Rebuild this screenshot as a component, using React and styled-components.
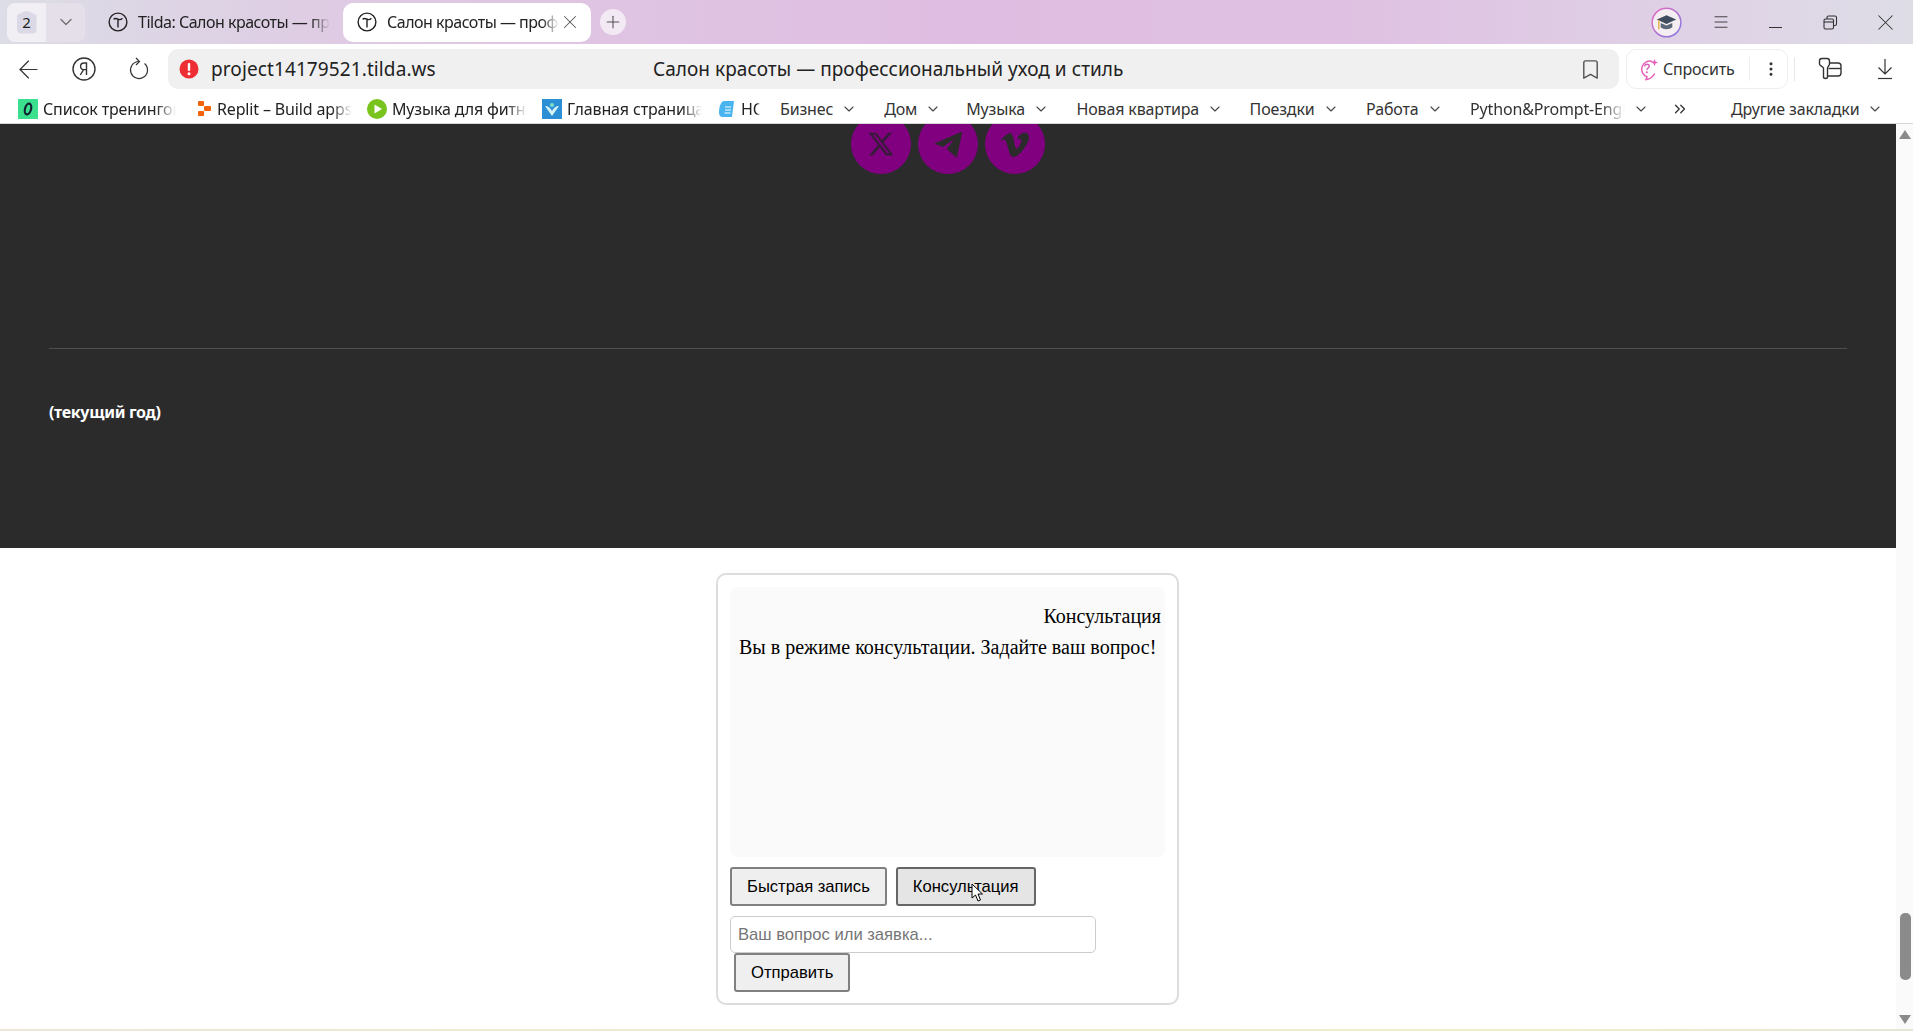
import React from "react";
import styled, { createGlobalStyle } from "styled-components";
import { ChevronDown, ChevronsRight, Plus, X, ArrowLeft, Menu, Bookmark, EllipsisVertical } from "lucide-react";

const GlobalStyle = createGlobalStyle`
  html, body { margin: 0; padding: 0; height: 100%; overflow: hidden; background: #fff; }
`;

const chromeFont = `"Noto Sans", "Open Sans", "Liberation Sans", sans-serif`;

const Shell = styled.div`
  width: 1913px;
  height: 1031px;
  display: flex;
  flex-direction: column;
  overflow: hidden;
  font-family: ${chromeFont};
  color: #222;
`;

const TabStrip = styled.div`
  height: 44px;
  flex: none;
  display: flex;
  align-items: center;
  padding-left: 7px;
  background: linear-gradient(90deg, #dcdde6 0%, #dfc9e3 20%, #dfbde2 50%, #dfc0e2 70%, #dfd3e6 90%, #dedde6 100%);
`;

const TabCounter = styled.div`
  width: 78px;
  height: 39px;
  display: flex;
  border-radius: 8px;
  background: #e5dfe9;
  overflow: hidden;
  margin-right: 7px;
`;

const CounterCell = styled.div`
  width: 39px;
  display: flex;
  align-items: center;
  justify-content: center;
  background: ${(p) => (p.$light ? "#f1eff3" : "transparent")};
  color: #777;
`;

const CounterBadge = styled.span`
  width: 20px;
  height: 23px;
  border-radius: 5px;
  background: #dcd9e6;
  clip-path: polygon(50% 0, 100% 20%, 100% 100%, 0 100%, 0 20%);
  display: flex;
  align-items: center;
  justify-content: center;
  font-size: 15px;
  color: #222;
`;

const Tab = styled.div`
  width: ${(p) => (p.$active ? 248 : 251)}px;
  height: 39px;
  flex: none;
  display: flex;
  align-items: center;
  padding: ${(p) => (p.$active ? "0 10px 0 14px" : "0 13px 0 16px")};
  box-sizing: border-box;
  border-radius: 10px;
  background: ${(p) => (p.$active ? "#fff" : "transparent")};
  font-size: 16px;
  letter-spacing: -0.5px;
  margin-right: ${(p) => (p.$active ? "9px" : "0")};
`;

const TabTitle = styled.span`
  flex: 1;
  min-width: 0;
  margin-left: 10px;
  overflow: hidden;
  white-space: nowrap;
  -webkit-mask-image: linear-gradient(90deg, #000 90%, transparent);
  mask-image: linear-gradient(90deg, #000 90%, transparent);
`;

const NewTab = styled.div`
  width: 26px;
  height: 26px;
  border-radius: 50%;
  background: #f3e9f5;
  display: flex;
  align-items: center;
  justify-content: center;
  color: #555;
`;

const StripSpacer = styled.div`
  flex: 1;
`;

const WindowButtons = styled.div`
  display: flex;
  align-items: center;
  color: #333;
`;

const WindowButton = styled.div`
  width: 55px;
  height: 28px;
  display: flex;
  justify-content: center;
  align-items: center;
`;

const MinimizeBar = styled.span`
  width: 13px;
  height: 1px;
  margin-top: 11px;
  background: #333;
`;

const Toolbar = styled.div`
  height: 45px;
  flex: none;
  box-sizing: border-box;
  display: flex;
  align-items: center;
  background: #fff;
  border-radius: 10px 10px 0 0;
  padding: 5px 0 0 1px;
`;

const ToolIcon = styled.div`
  width: 55px;
  flex: none;
  display: flex;
  justify-content: center;
  align-items: center;
  color: #333;
`;

const AddressBar = styled.div`
  width: 1451px;
  height: 40px;
  margin-left: 2px;
  flex: none;
  display: flex;
  align-items: center;
  position: relative;
  padding: 0 17px 0 11px;
  box-sizing: border-box;
  border-radius: 10px;
  background: #f0f0f0;
  font-size: 19px;
`;

const UrlText = styled.span`
  margin-left: 12px;
  letter-spacing: 0.1px;
`;

const PageTitle = styled.span`
  position: absolute;
  left: 485px;
  letter-spacing: 0.05px;
`;

const AddressEnd = styled.div`
  margin-left: auto;
  display: flex;
  color: #555;
`;

const AskPill = styled.div`
  width: 162px;
  height: 40px;
  margin-left: 7px;
  flex: none;
  display: flex;
  align-items: center;
  box-sizing: border-box;
  padding-left: 11px;
  border: 1px solid #eeeeee;
  border-radius: 10px;
  font-size: 16px;
  letter-spacing: -0.2px;
  color: #333;
`;

const AskLabel = styled.span`
  margin-left: 4px;
`;

const AskDivider = styled.span`
  width: 1px;
  height: 24px;
  background: #eee;
  margin: 0 12px 0 14px;
`;

const ToolSeparator = styled.span`
  width: 1px;
  height: 24px;
  background: #e6e6e6;
  margin: 0 7px 0 6px;
`;

const Bookmarks = styled.div`
  height: 35px;
  flex: none;
  display: flex;
  align-items: center;
  background: #fff;
  font-size: 16px;
  letter-spacing: -0.15px;
  padding: 6px 0 0 18px;
  border-bottom: 1px solid #d8d8d8;
  box-sizing: border-box;
`;

const BookmarkLink = styled.div`
  width: ${(p) => p.$w}px;
  margin-right: ${(p) => p.$gap}px;
  flex: none;
  display: flex;
  align-items: center;
  gap: 5px;
`;

const BookmarkFolder = styled.div`
  margin-right: ${(p) => p.$gap}px;
  flex: none;
  display: flex;
  align-items: center;
  gap: 8px;
  color: #333;
`;

const FadeLabel = styled.span`
  flex: 1;
  overflow: hidden;
  white-space: nowrap;
  -webkit-mask-image: linear-gradient(90deg, #000 85%, transparent);
  mask-image: linear-gradient(90deg, #000 85%, transparent);
`;

const FolderClip = styled(FadeLabel)`
  flex: none;
  width: 155px;
`;

const Viewport = styled.div`
  flex: 1;
  min-height: 0;
  display: flex;
`;

const Page = styled.div`
  flex: 1;
  min-width: 0;
  display: flex;
  flex-direction: column;
  overflow: hidden;
`;

const Footer = styled.footer`
  height: 424px;
  flex: none;
  box-sizing: border-box;
  background: #2b2b2b;
  padding: 0 49px;
`;

const Socials = styled.div`
  display: flex;
  justify-content: center;
  gap: 7px;
  margin-top: -10px;
  height: 60px;
`;

const SocialDot = styled.a`
  width: 60px;
  height: 60px;
  border-radius: 50%;
  background: #800080;
  display: flex;
  align-items: center;
  justify-content: center;
`;

const FooterRule = styled.hr`
  margin: 174px 0 0;
  border: 0;
  height: 1px;
  background: #505050;
`;

const Copyright = styled.p`
  margin: 52px 0 0;
  color: #fff;
  font: 700 16px/22px "Noto Sans", "Open Sans", sans-serif;
  letter-spacing: -0.3px;
`;

const WidgetArea = styled.section`
  flex: 1;
  min-height: 0;
  display: flex;
  flex-direction: column;
  align-items: center;
  padding: 25px 0 0;
`;

const Widget = styled.div`
  width: 463px;
  height: 432px;
  margin-left: -1px;
  box-sizing: border-box;
  border: 2px solid #ddd;
  border-radius: 10px;
  padding: 12px;
  background: #fff;
  font-family: "Liberation Sans", Arial, sans-serif;
`;

const ChatLog = styled.div`
  height: 270px;
  border-radius: 8px;
  background: #fafafa;
  padding: 17px 4px 0 9px;
  box-sizing: border-box;
  font: 20px/1.2 "Liberation Serif", "Times New Roman", serif;
  color: #000;
`;

const ChatLine = styled.div`
  text-align: ${(p) => (p.$right ? "right" : "left")};
  margin-bottom: 7px;
`;

const ModeRow = styled.div`
  display: flex;
  gap: 9px;
  margin-top: 10px;
`;

const PlainButton = styled.button`
  position: relative;
  height: 39px;
  padding: 0 15px;
  box-sizing: border-box;
  border: 2px solid ${(p) => (p.$hover ? "#666" : "#808080")};
  border-radius: 3px;
  background: ${(p) => (p.$hover ? "#e5e5e5" : "#efefef")};
  font: 16.6px "Liberation Sans", Arial, sans-serif;
  color: #000;
`;

const InputBox = styled.input`
  display: block;
  width: 366px;
  height: 37px;
  margin-top: 10px;
  padding: 0 7px;
  box-sizing: border-box;
  border: 1px solid #ccc;
  border-radius: 5px;
  font: 16.6px "Liberation Sans", Arial, sans-serif;
  outline: none;
  &::placeholder { color: #757575; }
`;

const SendButton = styled(PlainButton)`
  display: block;
  margin-left: 4px;
`;

const CursorMark = styled.svg`
  position: absolute;
  left: 73px;
  top: 14px;
`;

const BottomEdge = styled.div`
  height: 2px;
  flex: none;
  background: linear-gradient(90deg, #efe6d8, #f0edc8 80%, #e6e6d8);
`;

const Scrollbar = styled.div`
  width: 17px;
  flex: none;
  background: #fafafa;
  display: flex;
  flex-direction: column;
  align-items: center;
  position: relative;
`;

const ArrowUp = styled.div`
  margin-top: 6px;
  width: 0;
  height: 0;
  border-left: 6px solid transparent;
  border-right: 6px solid transparent;
  border-bottom: 9px solid #8a8a8a;
`;

const ArrowDown = styled.div`
  margin-top: auto;
  margin-bottom: 5px;
  width: 0;
  height: 0;
  border-left: 6px solid transparent;
  border-right: 6px solid transparent;
  border-top: 9px solid #8a8a8a;
`;

const Thumb = styled.div`
  position: absolute;
  top: 789px;
  left: 4px;
  width: 11px;
  height: 67px;
  border-radius: 5px;
  background: #8b8b8b;
`;

const TildaMark = () => (
  <svg width="20" height="20" viewBox="0 0 20 20" fill="none" stroke="#222" strokeWidth="1.4" style={{ flex: "none" }}>
    <circle cx="10" cy="10" r="8.9" />
    <path d="M5.6 7.4c1.2-1.6 2.8-1 4.4-.2s3 .6 4.4-1" />
    <path d="M10 7.2v8.3" />
  </svg>
);

const YandexMark = () => (
  <svg width="26" height="26" viewBox="0 0 26 26" fill="none" stroke="#333" strokeWidth="1.4">
    <circle cx="13" cy="13" r="11" />
    <path d="M15.5 19V7h-2.600c-2 0-3.300 1.200-3.300 3.300s1.300 3.300 3.300 3.300h2.600M12.600 13.600 9.300 19" />
  </svg>
);

const ReloadMark = () => (
  <svg width="24" height="24" viewBox="0 0 24 24" fill="none" stroke="#333" strokeWidth="1.2">
    <path d="M17.5 6.5A8.5 8.5 0 1 1 11.5 4.500" />
    <path d="M9 1l3.500 3.500L9 8" />
  </svg>
);

const AlertMark = () => (
  <svg width="20" height="20" viewBox="0 0 20 20" style={{ flex: "none" }}>
    <circle cx="10" cy="10" r="9.5" fill="#ee2e35" />
    <rect x="8.8" y="4" width="2.4" height="8" rx="1.1" fill="#fff" />
    <circle cx="10" cy="14.8" r="1.5" fill="#fff" />
  </svg>
);

const AskMark = () => (
  <svg width="21" height="23" viewBox="0 0 21 23" fill="none" style={{ flex: "none" }}>
    <path d="M14.5 3.6A8 8 0 1 0 9 18.8c0 1.4-.6 2.5-1.7 3 3.6-.5 7.8-3 9.4-6.3" stroke="#e75fb7" strokeWidth="1.5" />
    <path d="M6.6 8.3c.2-1.4 1.2-2 2.3-2 1.3 0 2.3.8 2.3 2 0 1.800-2.3 1.700-2.3 3.700" stroke="#d85ab8" strokeWidth="1.4" />
    <circle cx="8.9" cy="14.3" r="1" fill="#d85ab8" />
    <path d="M16.5 1l1 2.6 2.5 1-2.500 1-1 2.600-1-2.600-2.500-1 2.500-1z" fill="#e75fb7" />
  </svg>
);

const PasswordMark = () => (
  <svg width="26" height="26" viewBox="0 0 26 26" fill="none" stroke="#333" strokeWidth="1.4">
    <path d="M5 2.500h5c1.500 0 2.500 1 2.500 2.500v3c0 2-2 2.500-2 4v9c0 2-4 2-4 0v-9c0-1.500-4-2-4-4V5c0-1.500 1-2.500 2.500-2.500z" />
    <path d="M12.500 7H21a3 3 0 0 1 3 3v7a3 3 0 0 1-3 3H10.500" />
    <path d="M11.500 12.500H24" />
  </svg>
);

const DownloadMark = () => (
  <svg width="24" height="24" viewBox="0 0 24 24" fill="none" stroke="#333" strokeWidth="1.2">
    <path d="M12 2v15M5.500 10.500 12 17l6.500-6.500" />
    <path d="M5 21.500h14" />
  </svg>
);

const RestoreMark = () => (
  <svg width="15" height="15" viewBox="0 0 15 15" fill="none" stroke="#333" strokeWidth="1.1">
    <rect x="1" y="4" width="9.5" height="10" rx="1.5" />
    <path d="M4 4V2.500A1.500 1.500 0 0 1 5.500 1H12a1.500 1.500 0 0 1 1.500 1.500V9A1.500 1.500 0 0 1 12 10.500h-1.500" />
    <path d="M1 7h9.500" />
  </svg>
);

const AssistantAvatar = () => (
  <svg width="31" height="31" viewBox="0 0 32 32" style={{ marginRight: 11, flex: "none" }}>
    <defs>
      <linearGradient id="ring" x1="0" y1="0" x2="1" y2="1">
        <stop offset="0" stopColor="#e76cc0" />
        <stop offset="1" stopColor="#7e78e0" />
      </linearGradient>
    </defs>
    <circle cx="16" cy="16" r="14.8" fill="#f4eef2" stroke="url(#ring)" strokeWidth="1.5" />
    <path d="M16 8.500 26 13l-10 4.500L6 13z" fill="#3f4c60" />
    <path d="M10 16.500V21c2.800 2.600 9.200 2.600 12 0v-4.500l-6 2.700z" fill="#5b6779" />
    <path d="M8 13.500V23" stroke="#e8b24a" strokeWidth="1.5" />
  </svg>
);

const ReplitMark = () => (
  <svg width="16" height="18" viewBox="0 0 16 18" style={{ flex: "none" }}>
    <rect x="2" y="1" width="6" height="5" rx="1" fill="#f26207" />
    <rect x="8" y="6" width="7" height="5" rx="1" fill="#f26207" />
    <rect x="2" y="11" width="6" height="5" rx="1" fill="#f26207" />
  </svg>
);

const SheetMark = () => (
  <svg width="20" height="20" viewBox="0 0 20 20" style={{ flex: "none" }}>
    <rect width="20" height="20" fill="#3be08e" />
    <ellipse cx="10" cy="10" rx="3" ry="5.5" fill="none" stroke="#123" strokeWidth="2.2" transform="rotate(15 10 10)" />
  </svg>
);

const PlayMark = () => (
  <svg width="20" height="20" viewBox="0 0 20 20" style={{ flex: "none" }}>
    <circle cx="10" cy="10" r="10" fill="#78c31c" />
    <path d="M7.500 5.500 15 10l-7.500 4.500z" fill="#fff" />
  </svg>
);

const HomeMark = () => (
  <svg width="20" height="20" viewBox="0 0 20 20" style={{ flex: "none" }}>
    <rect width="20" height="20" fill="#2b8fd6" />
    <path d="M10 17 3 7c3 0 5 1.500 7 5 2-3.500 4-5 7-5z" fill="#d7f2f4" />
    <circle cx="10" cy="6" r="2" fill="#7fe0c0" />
  </svg>
);

const NoteMark = () => (
  <svg width="18" height="20" viewBox="0 0 18 20" style={{ flex: "none" }}>
    <path d="M6 2h10l-2 16H5c-3 0-4-2-4-5 0-5 2-11 5-11z" fill="#4ab4f0" />
    <path d="M7 8h6M7 11h6M6.500 14h6" stroke="#bfe6fb" strokeWidth="1.5" />
  </svg>
);

const XGlyph = () => (
  <svg width="28" height="28" viewBox="0 0 24 24" fill="#3a1a3a">
    <path d="M18.244 2.250h3.308l-7.227 8.260 8.502 11.240H16.170l-5.214-6.817L4.990 21.750H1.680l7.730-8.835L1.254 2.250H8.080l4.713 6.231zm-1.161 17.520h1.833L7.084 4.126H5.117z" />
  </svg>
);

const TelegramGlyph = () => (
  <svg width="30" height="30" viewBox="0 0 24 24" fill="#2b2b2b">
    <path d="M23.500 2 1 11.500l7 2.800L17 8l-6 8 8 7z" />
  </svg>
);

const VimeoGlyph = () => (
  <svg width="28" height="28" viewBox="0 0 24 24" fill="#2b2b2b">
    <path d="M23.980 7.100c-.1 2.300-1.700 5.500-4.900 9.600-3.300 4.300-6.100 6.400-8.400 6.400-1.400 0-2.600-1.300-3.600-3.900L5.100 12.100C4.400 9.500 3.600 8.200 2.800 8.200c-.2 0-.8.400-1.900 1.100L0 8.200c1.200-1 2.400-2.100 3.500-3.200C5.100 3.600 6.300 2.900 7.100 2.800c1.900-.2 3 1.100 3.500 3.900.5 3 .8 4.900 1 5.600.5 2.500 1.100 3.700 1.800 3.700.5 0 1.300-.8 2.300-2.400 1-1.600 1.600-2.900 1.700-3.700.1-1.400-.4-2.100-1.700-2.100-.6 0-1.200.1-1.800.4C15.100 4.200 17.400 2.200 21 2.400c2 .1 3.100 1.600 3 4.700z" />
  </svg>
);

const Chevron = () => <ChevronDown size={16} strokeWidth={1.6} color="#444" />;

const folders = [
  ["Бизнес", 27],
  ["Дом", 25],
  ["Музыка", 27.5],
  ["Новая квартира", 26.5],
  ["Поездки", 27.5],
  ["Работа", 27.5],
];

export default function App() {
  return (
    <Shell>
      <GlobalStyle />
      <TabStrip>
        <TabCounter>
          <CounterCell $light><CounterBadge>2</CounterBadge></CounterCell>
          <CounterCell><ChevronDown size={20} strokeWidth={1.8} /></CounterCell>
        </TabCounter>
        <Tab>
          <TildaMark />
          <TabTitle>Tilda: Салон красоты — профессиональный</TabTitle>
        </Tab>
        <Tab $active>
          <TildaMark />
          <TabTitle>Салон красоты — профессиональный</TabTitle>
          <X size={22} strokeWidth={1.1} color="#555" style={{ flex: "none" }} />
        </Tab>
        <NewTab><Plus size={20} strokeWidth={1.3} /></NewTab>
        <StripSpacer />
        <AssistantAvatar />
        <WindowButtons>
          <WindowButton><Menu size={18} strokeWidth={1.2} /></WindowButton>
          <WindowButton><MinimizeBar /></WindowButton>
          <WindowButton><RestoreMark /></WindowButton>
          <WindowButton><X size={27} strokeWidth={0.9} /></WindowButton>
        </WindowButtons>
      </TabStrip>

      <Toolbar>
        <ToolIcon><ArrowLeft size={29} strokeWidth={1} /></ToolIcon>
        <ToolIcon><YandexMark /></ToolIcon>
        <ToolIcon><ReloadMark /></ToolIcon>
        <AddressBar>
          <AlertMark />
          <UrlText>project14179521.tilda.ws</UrlText>
          <PageTitle>Салон красоты — профессиональный уход и стиль</PageTitle>
          <AddressEnd><Bookmark size={23} strokeWidth={1.5} /></AddressEnd>
        </AddressBar>
        <AskPill>
          <AskMark />
          <AskLabel>Спросить</AskLabel>
          <AskDivider />
          <EllipsisVertical size={18} strokeWidth={2} />
        </AskPill>
        <ToolSeparator />
        <ToolIcon><PasswordMark /></ToolIcon>
        <ToolIcon><DownloadMark /></ToolIcon>
      </Toolbar>

      <Bookmarks>
        <BookmarkLink $w={158} $gap={20}><SheetMark /><FadeLabel>Список тренингов</FadeLabel></BookmarkLink>
        <BookmarkLink $w={156} $gap={15}><ReplitMark /><FadeLabel>Replit – Build apps</FadeLabel></BookmarkLink>
        <BookmarkLink $w={160} $gap={15}><PlayMark /><FadeLabel>Музыка для фитнеса</FadeLabel></BookmarkLink>
        <BookmarkLink $w={160} $gap={16}><HomeMark /><FadeLabel>Главная страница</FadeLabel></BookmarkLink>
        <BookmarkLink $w={42} $gap={20}><NoteMark /><FadeLabel>НОВОЕ</FadeLabel></BookmarkLink>
        {folders.map(([name, gap]) => (
          <BookmarkFolder key={name} $gap={gap}>{name} <Chevron /></BookmarkFolder>
        ))}
        <BookmarkFolder $gap={22}><FolderClip>Python&Prompt-Engineering</FolderClip> <Chevron /></BookmarkFolder>
        <BookmarkFolder $gap={42}><ChevronsRight size={18} strokeWidth={1.7} color="#333" /></BookmarkFolder>
        <BookmarkFolder $gap={0}>Другие закладки <Chevron /></BookmarkFolder>
      </Bookmarks>

      <Viewport>
        <Page>
          <Footer>
            <Socials>
              <SocialDot><XGlyph /></SocialDot>
              <SocialDot><TelegramGlyph /></SocialDot>
              <SocialDot><VimeoGlyph /></SocialDot>
            </Socials>
            <FooterRule />
            <Copyright>(текущий год)</Copyright>
          </Footer>
          <WidgetArea>
            <Widget>
              <ChatLog>
                <ChatLine $right>Консультация</ChatLine>
                <ChatLine>Вы в режиме консультации. Задайте ваш вопрос!</ChatLine>
              </ChatLog>
              <ModeRow>
                <PlainButton>Быстрая запись</PlainButton>
                <PlainButton $hover>
                  Консультация
                  <CursorMark width="13" height="19" viewBox="0 0 13 19">
                    <path d="M1 1v14l3.500-3 2.500 6 2.500-1-2.500-6h4.500z" fill="#fff" stroke="#000" strokeWidth="1" />
                  </CursorMark>
                </PlainButton>
              </ModeRow>
              <InputBox placeholder="Ваш вопрос или заявка..." />
              <SendButton>Отправить</SendButton>
            </Widget>
          </WidgetArea>
        </Page>
        <Scrollbar>
          <ArrowUp />
          <Thumb />
          <ArrowDown />
        </Scrollbar>
      </Viewport>
      <BottomEdge />
    </Shell>
  );
}
